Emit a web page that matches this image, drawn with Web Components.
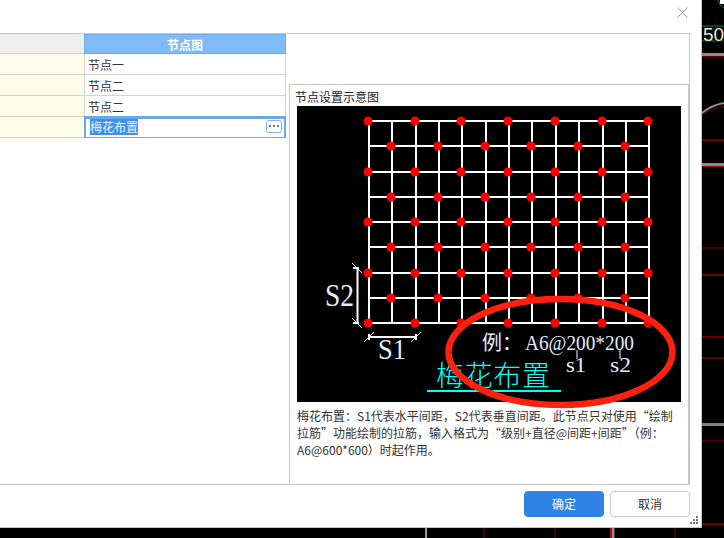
<!DOCTYPE html>
<html lang="zh-CN">
<head>
<meta charset="utf-8">
<title>节点设置</title>
<style>
  html, body { margin: 0; padding: 0; background: #000; }
  body { font: 12px "Noto Sans CJK SC", "Liberation Sans", sans-serif; color: #333; width: 724px; height: 538px; overflow: hidden; position: relative; }
</style>
</head>
<body>
<cad-backdrop></cad-backdrop>
<node-dialog>
  <node-table></node-table>
  <node-preview title-text="节点设置示意图">
    <plum-diagram></plum-diagram>
    <span>梅花布置：S1代表水平间距，S2代表垂直间距。此节点只对使用“绘制<br>拉筋”功能绘制的拉筋，输入格式为“级别+直径@间距+间距”（例：<br>A6@600*600）时起作用。</span>
  </node-preview>
  <dialog-button slot="footer" primary>确定</dialog-button>
  <dialog-button slot="footer">取消</dialog-button>
</node-dialog>

<script>
class CadBackdrop extends HTMLElement {
    constructor() {
        super();
        this.attachShadow({ mode: 'open' });
        // the CAD drawing showing around the dialog, coordinates are page pixels
        const hLines = [
            [26, '#0a8a0a', 1], [41, '#0a7a0a', 1], [54.5, '#8c8c8c', 3], [57, '#b00000', 1], [140, '#d00000', 1],
            [164.5, '#8c8c8c', 3], [166.5, '#a00000', 1], [248, '#800000', 1], [275, '#d00000', 1], [337, '#900000', 1.5],
            [358, '#c00000', 1], [424.5, '#808080', 3], [441, '#900000', 1], [524, '#d00000', 1]
        ].map(([y, c, w]) => `<line x1="702" x2="724" y1="${y}" y2="${y}" stroke="${c}" stroke-width="${w}"/>`).join('');
        const vLines = [
            [426, '#9a9a9a', 2], [484, '#900000', 1], [555, '#800000', 1], [610.5, '#c00000', 1], [613, '#8c8c8c', 3], [675, '#800000', 1]
        ].map(([x, c, w]) => `<line y1="528" y2="538" x1="${x}" x2="${x}" stroke="${c}" stroke-width="${w}"/>`).join('');
        this.shadowRoot.innerHTML = `
      <style>
        :host { display: block; position: absolute; inset: 0; background: #000; }
        svg { display: block; }
        text { font: 19px "Liberation Sans", sans-serif; fill: #e6e6e6; }
      </style>
      <svg width="724" height="538" viewBox="0 0 724 538">
        ${hLines}${vLines}
        <path d="M718 0q1 6 6 8" fill="none" stroke="#0a8a0a"/>
        <rect x="720" y="0" width="4" height="4" fill="#fff"/>
        <path d="M702 113q10-8 22-10" fill="none" stroke="#8c8c8c" stroke-width="2"/>
        <path d="M702 114q10-7 22-9" fill="none" stroke="#800000" stroke-width="1" transform="translate(0 1)"/>
        <text x="703" y="41">50</text>
      </svg>
    `;
    }
}

class NodeDialog extends HTMLElement {
    constructor() {
        super();
        this.attachShadow({ mode: 'open' });
        this.shadowRoot.innerHTML = `
      <style>
        :host {
          display: flex;
          flex-direction: column;
          position: relative;
          width: 701px;
          height: 527px;
          background: #fff;
          border-right: 1px solid #c4c4c4;
          border-bottom: 1px solid #c4c4c4;
        }
        .head {
          height: 33px;
          display: flex;
          justify-content: flex-end;
          padding: 7px 13px 0 0;
          box-sizing: border-box;
        }
        .close { width: 11px; height: 11px; }
        .frame {
          display: flex;
          width: 689px;
          height: 450px;
          border: solid #c8c8c8;
          border-width: 1px 1px 1px 0;
        }
        .foot {
          flex: 1;
          display: flex;
          justify-content: flex-end;
          gap: 6px;
          padding: 6px 11px 0 0;
        }
        .grip {
          position: absolute;
          right: 3px;
          bottom: 3px;
          width: 8px;
          height: 8px;
        }
      </style>
      <div class="head">
        <svg class="close" viewBox="0 0 11 11"><path d="M.5.5l10 10M10.5.5l-10 10" stroke="#a0a0a0" fill="none"/></svg>
      </div>
      <div class="frame"><slot></slot></div>
      <div class="foot"><slot name="footer"></slot></div>
      <svg class="grip" viewBox="0 0 8 8" fill="#777">
        <rect x="6" y="0" width="2" height="2"/><rect x="3" y="3" width="2" height="2"/><rect x="6" y="3" width="2" height="2"/>
        <rect x="0" y="6" width="2" height="2"/><rect x="3" y="6" width="2" height="2"/><rect x="6" y="6" width="2" height="2"/>
      </svg>
    `;
    }
}

class NodeTable extends HTMLElement {
    constructor() {
        super();
        this.attachShadow({ mode: 'open' });
        const rows = ['节点一', '节点二', '节点二'].map((t) => `
        <div class="side"></div><div class="cell">${t}</div>`).join('');
        this.shadowRoot.innerHTML = `
      <style>
        :host {
          display: grid;
          flex: none;
          grid-template-columns: 85px 201px;
          grid-auto-rows: 21px;
          grid-template-rows: 20px;
          width: 289px;
          align-content: start;
          line-height: 22px;
        }
        div { box-sizing: border-box; min-width: 0; }
        .corner { background: #eeeeee; border-bottom: 1px solid #cfcfcf; border-right: 1px solid #cfcfcf; }
        .title {
          margin-left: -1px;
          background: #80baf9;
          border: 1px solid #6faae9;
          color: #fff;
          font-weight: 700;
          text-align: center;
          line-height: 20px;
        }
        .side { background: #fffde7; border: solid #d2d2d2; border-width: 0 1px 1px 0; }
        .cell { background: #fff; border: solid #d2d2d2; border-width: 0 1px 1px 0; padding-left: 3px; color: #333; }
        .edit {
          margin: -1px 0 0 -1px;
          height: 22px;
          width: 202px;
          background: #fff;
          border: solid #6aa9e8;
          border-width: 3px 2px 1px 2px;
          display: flex;
          align-items: flex-start;
          justify-content: space-between;
          padding: 0 2px 0 4px;
        }
        .sel { background: #3f90ea; color: #e8f2ff; line-height: 16px; height: 16px; }
        .more { width: 16px; height: 13px; margin-top: 1px; display: block; }
      </style>
      <div class="corner"></div><div class="title">节点图</div>${rows}
      <div class="side"></div>
      <div class="edit">
        <span class="sel">梅花布置</span>
        <svg class="more" viewBox="0 0 16 13">
          <rect x=".5" y=".5" width="15" height="12" rx="2" fill="#fff" stroke="#7fb0e6"/>
          <g fill="#3f7fc8"><rect x="3" y="5" width="2" height="2"/><rect x="7" y="5" width="2" height="2"/><rect x="11" y="5" width="2" height="2"/></g>
        </svg>
      </div>
    `;
    }
}

class NodePreview extends HTMLElement {
    constructor() {
        super();
        this.attachShadow({ mode: 'open' });
        this.shadowRoot.innerHTML = `
      <style>
        :host {
          display: flex;
          flex-direction: column;
          flex: 1;
          margin-top: 50px;
          border: solid #c8c8c8;
          border-width: 1px 1px 0 1px;
          min-width: 0;
        }
        .title { height: 21px; line-height: 24px; padding-left: 5px; color: #222; }
        .body { padding-left: 7px; width: 384px; }
        ::slotted(span) { display: block; margin-top: 5px; line-height: 17px; color: #333; white-space: nowrap; }
      </style>
      <div class="title"></div>
      <div class="body">
        <slot></slot>
      </div>
    `;
        this.shadowRoot.querySelector('.title').textContent = this.getAttribute('title-text');
    }
}

class PlumDiagram extends HTMLElement {
    constructor() {
        super();
        this.attachShadow({ mode: 'open' });
        const xs = [], ys = [];
        for (let i = 0; i < 13; i++) xs.push(369 + i * 23.35);
        for (let i = 0; i < 9; i++) ys.push(121 + i * 25.25);
        let lines = '', dots = '';
        xs.forEach((x) => {
            const rx = Math.round(x);
            lines += `<line x1="${rx}" x2="${rx}" y1="121" y2="324"/>`;
        });
        ys.forEach((y, r) => {
            const ry = Math.round(y);
            lines += `<line x1="368" x2="650" y1="${ry}" y2="${ry}"/>`;
            xs.forEach((x, c) => {
                if (c % 2 === r % 2) dots += `<circle cx="${Math.round(x) - 1}" cy="${ry}" r="4.5"/>`;
            });
        });
        this.shadowRoot.innerHTML = `
      <style>
        :host { display: block; width: 384px; height: 296px; background: #000; }
        svg { display: block; overflow: visible; }
        .grid line { stroke: #fff; stroke-width: 2; }
        .dim path { stroke: #fff; fill: none; }
        text { font-family: "Liberation Serif", "Noto Sans CJK SC", serif; fill: #e4eeff; }
        .cy { fill: #00ffff; font-family: "Noto Sans CJK SC", sans-serif; font-weight: 300; }
      </style>
      <svg width="384" height="296" viewBox="297 106 384 296">
        <g class="grid">${lines}</g>
        <g fill="#ff0000">${dots}</g>
        <g class="dim">
          <path stroke-width="2" d="M357.5 268v55M353 268h6M353 323h6M369 337h47M369 334v6M416 334v6"/>
          <path d="M352 263l10 10M352 318l10 10M364 342l10-10M411 342l10-10"/>
          <path d="M577 350v9M620 350v9"/>
        </g>
        <text x="325" y="306" font-size="31" textLength="29" lengthAdjust="spacingAndGlyphs">S2</text>
        <text x="378" y="359" font-size="29" textLength="28" lengthAdjust="spacingAndGlyphs">S1</text>
        <text x="482" y="350" font-size="20">例：</text>
        <text x="525" y="350" font-size="20" textLength="109" lengthAdjust="spacingAndGlyphs">A6@200*200</text>
        <text x="566" y="372" font-size="22" textLength="20" lengthAdjust="spacingAndGlyphs">s1</text>
        <text x="610" y="372" font-size="22" textLength="21" lengthAdjust="spacingAndGlyphs">s2</text>
        <text class="cy" x="436" y="386" font-size="28" textLength="114">梅花布置</text>
        <rect x="427" y="390" width="134" height="2" fill="#00ffff"/>
        <ellipse cx="560.5" cy="352" rx="112" ry="53" fill="none" stroke="#ff2010" stroke-width="6.5"/>
      </svg>
    `;
    }
}

class DialogButton extends HTMLElement {
    constructor() {
        super();
        this.attachShadow({ mode: 'open' });
        this.shadowRoot.innerHTML = `
      <style>
        :host {
          display: flex;
          align-items: center;
          justify-content: center;
          box-sizing: border-box;
          width: 80px;
          height: 26px;
          padding-bottom: 2px;
          border-radius: 4px;
          border: 1px solid #cccccc;
          background: #fff;
          color: #333;
        }
        :host([primary]) { background: #2f83e4; border-color: #2f83e4; color: #fff; }
      </style>
      <slot></slot>
    `;
    }
}

customElements.define('cad-backdrop', CadBackdrop);
customElements.define('node-dialog', NodeDialog);
customElements.define('node-table', NodeTable);
customElements.define('node-preview', NodePreview);
customElements.define('plum-diagram', PlumDiagram);
customElements.define('dialog-button', DialogButton);
</script>
</body>
</html>
